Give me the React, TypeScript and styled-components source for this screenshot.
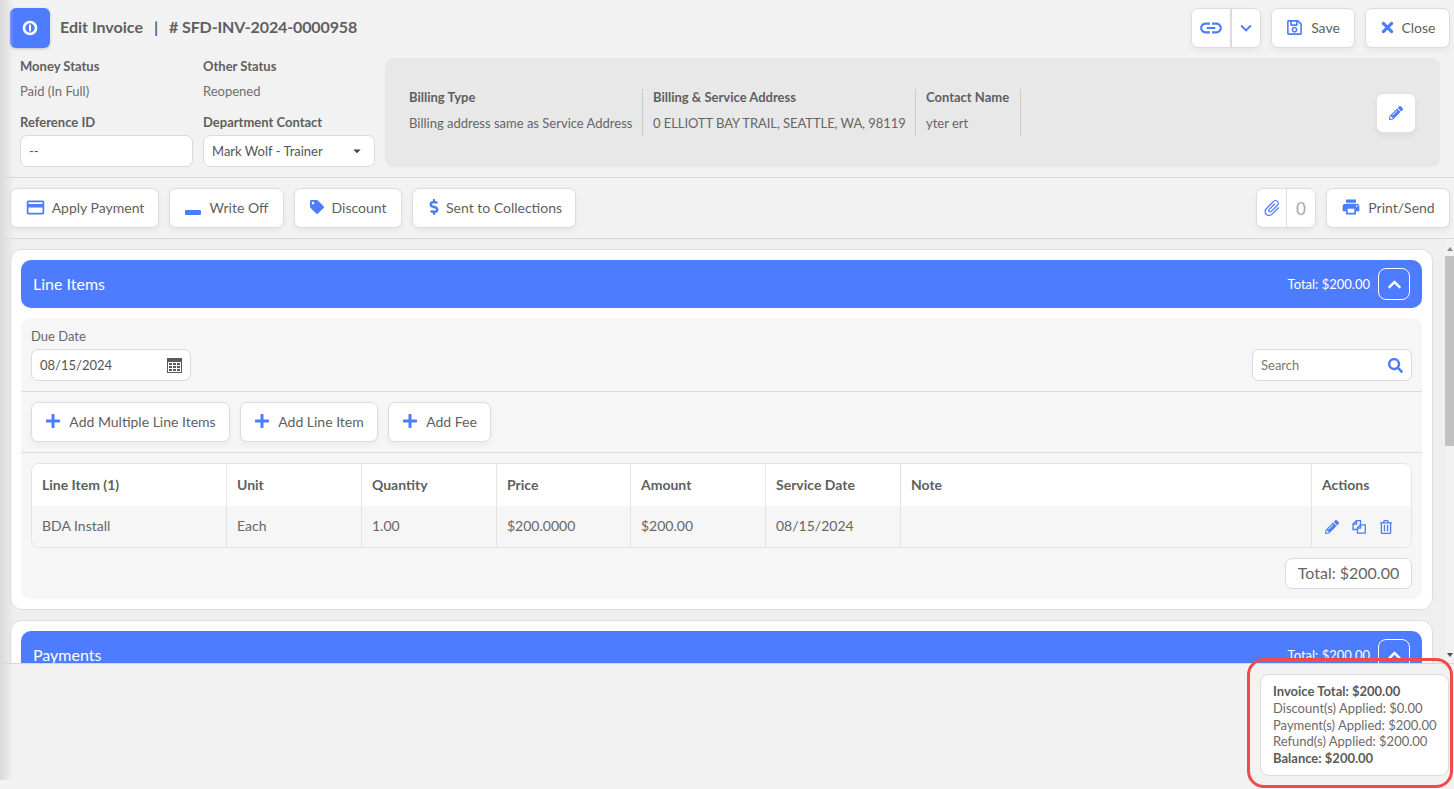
import React from "react";
import styled, { createGlobalStyle } from "styled-components";
import {
  MdLink, MdKeyboardArrowDown, MdOutlineCreditCard, MdAttachFile, MdPrint, MdArrowDropDown,
} from "react-icons/md";
import {
  FaPlus, FaTimes, FaPencilAlt, FaDollarSign, FaTag, FaRegSave, FaChevronUp, FaSearch, FaRegTrashAlt,
} from "react-icons/fa";

const Global = createGlobalStyle`
  * { box-sizing: border-box; }
  html, body { margin: 0; padding: 0; height: 100%; overflow: hidden; }
  body { font-family: Lato, "Noto Sans", sans-serif; color: #555; background: #f2f2f2; }
  svg { display: block; flex: none; }
`;

const blue = "#4d7cfe";

const Page = styled.div`
  position: relative;
  width: 1454px;
  height: 789px;
  display: flex;
  flex-direction: column;
  background: #f2f2f2;
  overflow: hidden;
`;
const EdgeShade = styled.div`
  position: absolute;
  left: 0; top: 0; bottom: 9px;
  width: 14px;
  background: linear-gradient(to right, #d9d9d9, rgba(242,242,242,0));
  border-bottom-right-radius: 10px;
  pointer-events: none;
  z-index: 3;
`;
const TitleBar = styled.header`
  display: flex;
  align-items: center;
  justify-content: space-between;
  height: 40px;
  margin: 8px 4px 0 10px;
`;
const TitleGroup = styled.div`
  display: flex;
  align-items: center;
  gap: 10px;
`;
const AppBadge = styled.div`
  width: 40px; height: 40px;
  border-radius: 6px;
  background: ${blue};
  box-shadow: 0 1px 3px rgba(0,0,0,.2);
  display: flex; align-items: center; justify-content: center;
`;
const Title = styled.h1`
  margin: 0;
  padding-bottom: 2px;
  display: flex;
  gap: 11px;
  font-size: 16px;
  line-height: 38px;
  font-weight: 700;
  color: #5f5f5f;
`;
const InvoiceNumber = styled.span`
  letter-spacing: -0.13px;
`;
const ButtonRow = styled.div`
  display: flex;
  gap: 10px;
`;
const Btn = styled.button<{ $w?: number; $gap?: number }>`
  height: 40px;
  width: ${p => (p.$w ? `${p.$w}px` : "auto")};
  padding: 0 0 2px;
  display: inline-flex;
  align-items: center;
  justify-content: center;
  gap: ${p => p.$gap ?? 6}px;
  background: #fff;
  border: 1px solid #dcdcdc;
  border-radius: 7px;
  box-shadow: 0 3px 6px rgba(0,0,0,.05);
  font: 400 14px Lato, sans-serif;
  color: #5f5f5f;
  white-space: nowrap;
`;
const SplitBtn = styled.div<{ $w: number }>`
  height: 40px;
  width: ${p => p.$w}px;
  display: flex;
  background: #fff;
  border: 1px solid #dcdcdc;
  border-radius: 7px;
  box-shadow: 0 3px 6px rgba(0,0,0,.05);
`;
const SplitCell = styled.div<{ $w?: number; $line?: number }>`
  flex: ${p => (p.$w ? `0 0 ${p.$w}px` : "1")};
  display: flex;
  align-items: center;
  justify-content: center;
  font-size: 17px;
  color: #a9a9a9;
  border-right: ${p => (p.$line ? `${p.$line}px solid #dcdcdc` : "none")};
`;
const InfoRow = styled.section`
  display: flex;
  height: 109px;
  margin: 10px 14px 0 20px;
`;
const StatusGrid = styled.div`
  flex: 0 0 355px;
  display: grid;
  grid-template-columns: 173px 172px;
  column-gap: 10px;
  grid-template-rows: 16px 40px 1fr;
`;
const Label = styled.div`
  font-size: 13px;
  line-height: 16px;
  font-weight: 700;
  color: #5f5f5f;
`;
const Value = styled.div`
  font-size: 13px;
  line-height: 16px;
  padding-top: 9px;
  color: #6e6e6e;
`;
const Field = styled.div`
  display: flex;
  flex-direction: column;
  gap: 5px;
`;
const InputBox = styled.div<{ $w?: number }>`
  height: 32px;
  width: ${p => (p.$w ? `${p.$w}px` : "100%")};
  padding: 0 8px;
  display: flex;
  align-items: center;
  justify-content: space-between;
  background: #fff;
  border: 1px solid #dadada;
  border-radius: 7px;
  font-size: 13px;
  color: #555;
`;
const SearchHint = styled.span`
  color: #777;
`;
const BillingPanel = styled.div`
  flex: 0 0 1055px;
  margin-left: 10px;
  background: #e8e8e8;
  border-radius: 8px;
  display: flex;
  align-items: center;
  padding: 0 24px;
`;
const BillingCol = styled.div<{ $w: number }>`
  flex: 0 0 ${p => p.$w}px;
  height: 47px;
  padding: 0 0 0 10px;
  border-right: 1px solid #ccc;
  display: flex;
  flex-direction: column;
  gap: 10px;
  white-space: nowrap;
  &:first-child { padding-left: 0; }
`;
const BillingSpacer = styled.div`
  flex: 1;
`;
const SquareBtn = styled(Btn)`
  width: 40px;
  padding: 0;
  border: 1px solid #e2e2e2;
`;
const Rule = styled.hr`
  margin: 10px 0 0;
  height: 1px;
  border: 0;
  background: #d8d8d8;
`;
const ActionBar = styled.div`
  display: flex;
  justify-content: space-between;
  margin: 10px 4px 10px 10px;
`;
const Middle = styled.div`
  height: 426px;
  flex: none;
  display: flex;
  background: #efefef;
  border-top: 1px solid #d8d8d8;
  border-bottom: 1px solid #d8d8d8;
  overflow: hidden;
`;
const Scroller = styled.div`
  flex: 1;
  padding: 10px 12px 0 10px;
  display: flex;
  flex-direction: column;
  gap: 10px;
  min-width: 0;
`;
const Card = styled.section`
  flex: none;
  background: #fff;
  border: 1px solid #dedede;
  border-radius: 12px;
  padding: 10px;
  display: flex;
  flex-direction: column;
  gap: 10px;
`;
const CardHead = styled.div`
  height: 48px;
  flex: none;
  background: ${blue};
  border-radius: 10px;
  color: #fff;
  display: flex;
  align-items: center;
  justify-content: space-between;
  padding: 0 12px;
  font-size: 16px;
`;
const HeadTitle = styled.span`
  padding-bottom: 2px;
`;
const HeadRight = styled.div`
  display: flex;
  align-items: center;
  gap: 8px;
  font-size: 13px;
`;
const Collapse = styled.div`
  width: 32px; height: 32px;
  border: 1px solid #fff;
  border-radius: 8px;
  display: flex; align-items: center; justify-content: center;
`;
const CardBody = styled.div`
  background: #f6f6f6;
  border-radius: 9px;
  display: flex;
  flex-direction: column;
`;
const DueRow = styled.div`
  height: 74px;
  padding: 10px;
  display: flex;
  justify-content: space-between;
  align-items: flex-end;
  border-bottom: 1px solid #dcdcdc;
`;
const DueField = styled.div`
  display: flex;
  flex-direction: column;
  gap: 5px;
`;
const SmallLabel = styled.div<{ $tight?: boolean }>`
  font-size: 13px;
  line-height: 16px;
  color: #666;
  letter-spacing: ${p => (p.$tight ? "-0.07px" : "normal")};
`;
const AddRow = styled.div`
  height: 61px;
  padding: 10px;
  display: flex;
  gap: 10px;
  border-bottom: 1px solid #dcdcdc;
`;
const Table = styled.div`
  margin: 10px 10px 0;
  height: 85px;
  border: 1px solid #e4e4e4;
  border-radius: 8px;
  overflow: hidden;
  display: grid;
  grid-template-columns: 195px 135px 135px 134px 135px 135px 411px 1fr;
  grid-template-rows: 42px 1fr;
`;
const Th = styled.div<{ $last?: boolean }>`
  background: #fff;
  border-right: ${p => (p.$last ? "none" : "1px solid #e4e4e4")};
  padding: 0 10px 2px;
  display: flex;
  align-items: center;
  font-size: 14px;
  font-weight: 700;
  color: #5f5f5f;
`;
const Td = styled.div<{ $last?: boolean }>`
  background: #f6f6f6;
  border-right: ${p => (p.$last ? "none" : "1px solid #e4e4e4")};
  padding: 0 10px 2px;
  display: flex;
  align-items: center;
  font-size: 14px;
  color: #666;
`;
const RowIcons = styled.div`
  display: flex;
  align-items: center;
  gap: 13px;
  padding: 2px 0 0 3px;
`;
const TotalRow = styled.div`
  display: flex;
  justify-content: flex-end;
  padding: 10px;
`;
const TotalBox = styled.div`
  width: 127px;
  height: 31px;
  padding-bottom: 2px;
  background: #fff;
  border: 1px solid #dadada;
  border-radius: 7px;
  display: flex;
  align-items: center;
  justify-content: center;
  font-size: 16px;
  color: #666;
`;
const ScrollTrack = styled.div`
  flex: 0 0 9px;
  display: flex;
  flex-direction: column;
  align-items: center;
  background: #f1f1f1;
`;
const Arrow = styled.div<{ $up?: boolean }>`
  flex: none;
  margin: ${p => (p.$up ? "8px 0 5px" : "auto 0 6px")};
  width: 0; height: 0;
  border-left: 3.5px solid transparent;
  border-right: 3.5px solid transparent;
  ${p => (p.$up ? "border-bottom: 4px solid #8a8a8a;" : "border-top: 4px solid #505050;")}
`;
const Thumb = styled.div`
  width: 100%;
  height: 190px;
  flex: none;
  background: #c1c1c1;
`;
const Footer = styled.footer`
  flex: 1;
  display: flex;
  justify-content: flex-end;
  padding: 10px 5px 0 0;
`;
const Summary = styled.div`
  width: 189px;
  height: 102px;
  background: #fff;
  border: 1px solid #dcdcdc;
  border-radius: 9px;
  padding: 8px 0 0 12px;
  font-size: 13px;
  line-height: 16.8px;
  color: #6b6b6b;
`;
const Strong = styled.div`
  font-weight: 700;
  color: #5a5a5a;
`;
const Callout = styled.div`
  position: absolute;
  left: 1247px; top: 658px;
  width: 206px; height: 130px;
  border: 3px solid #f24a4a;
  border-radius: 17px;
  pointer-events: none;
  z-index: 4;
`;

const ic = { color: blue };

const MinusBar = () => (
  <svg width="16" height="16" viewBox="0 0 16 16">
    <rect x="0" y="11" width="16" height="5" rx="1" fill={blue} />
  </svg>
);
const Calendar = () => (
  <svg width="15" height="15" viewBox="0 0 15 15">
    <rect x="0" y="0" width="15" height="15" fill="#5a5a5a" />
    <rect x="1" y="4" width="13" height="10" fill="#fff" />
    {[2, 6, 10].map(x =>
      [5, 8, 11].map(y => <rect key={`${x}-${y}`} x={x} y={y} width="3" height="2" fill="#5a5a5a" />)
    )}
  </svg>
);
const CopyDocs = () => (
  <svg width="14" height="14" viewBox="0 0 14 14" fill="none" stroke={blue} strokeWidth="1.3">
    <path d="M5.5 9.5H1V4l3.5-3.5H8.5V5" />
    <path d="M4.5 1v3H1" />
    <path d="M5.5 13.2V7.5L8.5 4.8h4.8v8.4z" fill="#f6f6f6" />
    <path d="M8.6 5v3H5.6" />
  </svg>
);

function Head({ title }: { title: string }) {
  return (
    <CardHead>
      <HeadTitle>{title}</HeadTitle>
      <HeadRight>
        <span>Total: $200.00</span>
        <Collapse><FaChevronUp size={15} color="#fff" /></Collapse>
      </HeadRight>
    </CardHead>
  );
}

export default function App() {
  return (
    <Page>
      <Global />
      <EdgeShade />
      <TitleBar>
        <TitleGroup>
          <AppBadge>
            <svg width="16" height="16" viewBox="0 0 16 16">
              <circle cx="8" cy="8" r="6" fill="none" stroke="#fff" strokeWidth="2.6" />
              <rect x="7" y="4.6" width="2" height="6.8" fill="#fff" />
            </svg>
          </AppBadge>
          <Title>
            <span>Edit Invoice</span>
            <span>|</span>
            <InvoiceNumber># SFD-INV-2024-0000958</InvoiceNumber>
          </Title>
        </TitleGroup>
        <ButtonRow>
          <SplitBtn $w={70}>
            <SplitCell $w={40} $line={2}><MdLink size={26} style={ic} /></SplitCell>
            <SplitCell><MdKeyboardArrowDown size={22} style={ic} /></SplitCell>
          </SplitBtn>
          <Btn $w={84} $gap={8}><FaRegSave size={17} style={ic} />Save</Btn>
          <Btn $w={85} $gap={5}><FaTimes size={17} style={ic} />Close</Btn>
        </ButtonRow>
      </TitleBar>

      <InfoRow>
        <StatusGrid>
          <Label>Money Status</Label>
          <Label>Other Status</Label>
          <Value>Paid (In Full)</Value>
          <Value>Reopened</Value>
          <Field>
            <Label>Reference ID</Label>
            <InputBox>--</InputBox>
          </Field>
          <Field>
            <Label>Department Contact</Label>
            <InputBox>Mark Wolf - Trainer<MdArrowDropDown size={18} color="#444" /></InputBox>
          </Field>
        </StatusGrid>
        <BillingPanel>
          <BillingCol $w={234}>
            <Label>Billing Type</Label>
            <SmallLabel>Billing address same as Service Address</SmallLabel>
          </BillingCol>
          <BillingCol $w={273}>
            <Label>Billing &amp; Service Address</Label>
            <SmallLabel $tight>0 ELLIOTT BAY TRAIL, SEATTLE, WA, 98119</SmallLabel>
          </BillingCol>
          <BillingCol $w={105}>
            <Label>Contact Name</Label>
            <SmallLabel>yter ert</SmallLabel>
          </BillingCol>
          <BillingSpacer />
          <SquareBtn><FaPencilAlt size={14} style={ic} /></SquareBtn>
        </BillingPanel>
      </InfoRow>

      <Rule />
      <ActionBar>
        <ButtonRow>
          <Btn $w={149}><MdOutlineCreditCard size={21} style={ic} />Apply Payment</Btn>
          <Btn $w={115} $gap={9}><MinusBar />Write Off</Btn>
          <Btn $w={108} $gap={8}><FaTag size={14} style={ic} />Discount</Btn>
          <Btn $w={164} $gap={4}><FaDollarSign size={16} style={ic} />Sent to Collections</Btn>
        </ButtonRow>
        <ButtonRow>
          <SplitBtn $w={60}>
            <SplitCell $w={30} $line={1}><MdAttachFile size={20} style={{ ...ic, transform: "rotate(45deg)" }} /></SplitCell>
            <SplitCell>0</SplitCell>
          </SplitBtn>
          <Btn $w={124} $gap={7}><MdPrint size={20} style={ic} />Print/Send</Btn>
        </ButtonRow>
      </ActionBar>

      <Middle>
        <Scroller>
          <Card>
            <Head title="Line Items" />
            <CardBody>
              <DueRow>
                <DueField>
                  <SmallLabel>Due Date</SmallLabel>
                  <InputBox $w={160}>08/15/2024<Calendar /></InputBox>
                </DueField>
                <InputBox $w={160}>
                  <SearchHint>Search</SearchHint>
                  <FaSearch size={15} style={ic} />
                </InputBox>
              </DueRow>
              <AddRow>
                <Btn $w={199} $gap={8}><FaPlus size={16} style={ic} />Add Multiple Line Items</Btn>
                <Btn $w={138} $gap={8}><FaPlus size={16} style={ic} />Add Line Item</Btn>
                <Btn $w={103} $gap={8}><FaPlus size={16} style={ic} />Add Fee</Btn>
              </AddRow>
              <Table>
                <Th>Line Item (1)</Th>
                <Th>Unit</Th>
                <Th>Quantity</Th>
                <Th>Price</Th>
                <Th>Amount</Th>
                <Th>Service Date</Th>
                <Th>Note</Th>
                <Th $last>Actions</Th>
                <Td>BDA Install</Td>
                <Td>Each</Td>
                <Td>1.00</Td>
                <Td>$200.0000</Td>
                <Td>$200.00</Td>
                <Td>08/15/2024</Td>
                <Td />
                <Td $last>
                  <RowIcons>
                    <FaPencilAlt size={14} style={ic} />
                    <CopyDocs />
                    <FaRegTrashAlt size={14} style={ic} />
                  </RowIcons>
                </Td>
              </Table>
              <TotalRow><TotalBox>Total: $200.00</TotalBox></TotalRow>
            </CardBody>
          </Card>
          <Card>
            <Head title="Payments" />
          </Card>
        </Scroller>
        <ScrollTrack>
          <Arrow $up />
          <Thumb />
          <Arrow />
        </ScrollTrack>
      </Middle>

      <Footer>
        <Summary>
          <Strong>Invoice Total: $200.00</Strong>
          <div>Discount(s) Applied: $0.00</div>
          <div>Payment(s) Applied: $200.00</div>
          <div>Refund(s) Applied: $200.00</div>
          <Strong>Balance: $200.00</Strong>
        </Summary>
      </Footer>
      <Callout />
    </Page>
  );
}
